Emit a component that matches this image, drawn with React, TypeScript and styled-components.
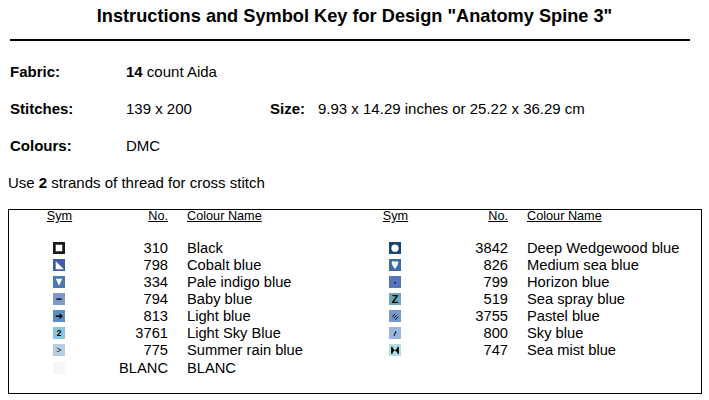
import React from "react";
import styled, { createGlobalStyle } from "styled-components";

const Global = createGlobalStyle`
  html, body { margin: 0; padding: 0; background: #fff; }
  body { font-family: "Liberation Sans", Arial, sans-serif; color: #000; }
`;

const Page = styled.div`
  width: 709px;
  height: 400px;
  box-sizing: border-box;
  padding: 0 8px 0 8px;
  overflow: hidden;
`;

const Title = styled.h1`
  margin: 0;
  padding-top: 6px;
  height: 20px;
  line-height: 20px;
  font-size: 18.2px;
  font-weight: bold;
  text-align: center;
`;

const Rule = styled.div`
  margin: 13px 11px 0 2px;
  height: 2px;
  background: #000;
`;

const InfoRow = styled.div`
  display: flex;
  align-items: center;
  height: 37px;
  font-size: 15px;
  padding-left: 2px;
`;

const InfoBlock = styled.div`
  margin-top: 12px;
`;

const Label = styled.span<{ $w: number }>`
  font-weight: bold;
  width: ${(p) => p.$w}px;
  flex: none;
`;

const Value = styled.span<{ $w?: number }>`
  width: ${(p) => (p.$w ? `${p.$w}px` : "auto")};
  flex: none;
  b { font-weight: bold; }
`;

const Strands = styled.div`
  font-size: 15px;
  height: 37px;
  line-height: 37px;
  b { font-weight: bold; }
`;

const KeyBox = styled.div`
  margin-top: 8px;
  height: 185px;
  box-sizing: border-box;
  border: 1px solid #000;
  width: 694px;
`;

const KeyGrid = styled.div`
  display: grid;
  grid-template-columns: 101px 58px 177px 101px 62px 1fr;
  grid-template-rows: 16px 13.5px;
  grid-auto-rows: 17.15px;
  align-items: center;
`;

const Head = styled.div<{ $align: "center" | "right" | "left"; $pad?: number }>`
  font-size: 12.7px;
  text-decoration: underline;
  text-align: ${(p) => p.$align};
  padding-left: ${(p) => p.$pad ?? 0}px;
  height: 16px;
  line-height: 16px;
  align-self: start;
  margin-top: -2px;
  white-space: nowrap;
`;

const Spacer = styled.div`
  grid-column: 1 / -1;
`;

const SymCell = styled.div`
  display: flex;
  justify-content: center;
  align-items: center;
  padding-right: 2px;
  padding-bottom: 1px;
`;

const Num = styled.div`
  font-size: 14.7px;
  text-align: right;
  line-height: 17px;
`;

const Name = styled.div`
  font-size: 14.7px;
  padding-left: 19px;
  line-height: 17px;
  white-space: nowrap;
`;

type SymKind =
  | "box" | "tri" | "down" | "dash" | "arrow" | "two" | "gt" | "blank"
  | "circle" | "heart" | "dot" | "z" | "hatch" | "slash" | "bowtie";

const Sym: React.FC<{ kind: SymKind; bg: string }> = ({ kind, bg }) => {
  const w = "#ffffff";
  const k = "#000000";
  let inner: React.ReactNode = null;
  switch (kind) {
    case "box":
      return (
        <svg width="12" height="12" viewBox="0 0 11 11">
          <rect x="1.25" y="1.25" width="8.5" height="8.5" fill="#fff" stroke="#1a1a1a" strokeWidth="2.5" />
        </svg>
      );
    case "tri":
      inner = <polygon points="2.5,2 2.5,9.5 10,9.5" fill={w} />;
      break;
    case "down":
      inner = <polygon points="2.5,2.5 8.5,2.5 5.5,9" fill={w} />;
      break;
    case "dash":
      inner = <rect x="3" y="5" width="5" height="1.2" fill={k} />;
      break;
    case "arrow":
      inner = (
        <>
          <rect x="2.5" y="5" width="4" height="1.4" fill={k} />
          <polygon points="6,3 9,5.7 6,8.4" fill={k} />
        </>
      );
      break;
    case "two":
      inner = (
        <text x="5.5" y="8.6" fontSize="7.5" fontWeight="bold" textAnchor="middle" fontFamily="Liberation Sans, Arial, sans-serif" fill={k}>
          2
        </text>
      );
      break;
    case "gt":
      inner = (
        <text x="5.5" y="8.4" fontSize="7.5" textAnchor="middle" fontFamily="Liberation Sans, Arial, sans-serif" fill="#222">
          &gt;
        </text>
      );
      break;
    case "blank":
      break;
    case "circle":
      inner = <circle cx="5.5" cy="5.7" r="3.3" fill={w} />;
      break;
    case "heart":
      inner = (
        <path d="M2.5 3.2 Q2.5 2 3.8 2 Q5.5 2 5.5 3.3 Q5.5 2 7.2 2 Q8.5 2 8.5 3.2 Q8.5 5.5 5.5 9.2 Q2.5 5.5 2.5 3.2 Z" fill={w} />
      );
      break;
    case "dot":
      inner = <rect x="5" y="5.5" width="1.3" height="1.3" fill={k} />;
      break;
    case "z":
      inner = (
        <text x="5.5" y="9.3" fontSize="10" fontWeight="bold" textAnchor="middle" fontFamily="Liberation Sans, Arial, sans-serif" fill={k}>
          Z
        </text>
      );
      break;
    case "hatch":
      inner = (
        <g stroke="#111" strokeWidth="0.9">
          <line x1="3" y1="6.5" x2="5.5" y2="3.5" />
          <line x1="4.2" y1="8" x2="7.2" y2="4.5" />
          <line x1="5.8" y1="9" x2="8.5" y2="6" />
        </g>
      );
      break;
    case "slash":
      inner = <line x1="4.5" y1="8" x2="6.5" y2="4" stroke="#111" strokeWidth="1" />;
      break;
    case "bowtie":
      inner = (
        <>
          <rect x="2" y="2.5" width="1.3" height="6.5" fill={k} />
          <rect x="7.7" y="2.5" width="1.3" height="6.5" fill={k} />
          <polygon points="2.5,3 5.5,5.75 2.5,8.5" fill={k} />
          <polygon points="8.5,3 5.5,5.75 8.5,8.5" fill={k} />
        </>
      );
      break;
  }
  return (
    <svg width="12" height="12" viewBox="0 0 11 11">
      <rect x="0" y="0" width="11" height="11" fill={bg} />
      {inner}
    </svg>
  );
};

type Entry = { kind: SymKind; bg: string; no: string; name: string };

const left: Entry[] = [
  { kind: "box", bg: "#fff", no: "310", name: "Black" },
  { kind: "tri", bg: "#3f5eac", no: "798", name: "Cobalt blue" },
  { kind: "down", bg: "#4b79b4", no: "334", name: "Pale indigo blue" },
  { kind: "dash", bg: "#8098cb", no: "794", name: "Baby blue" },
  { kind: "arrow", bg: "#5a8ec4", no: "813", name: "Light blue" },
  { kind: "two", bg: "#88c4de", no: "3761", name: "Light Sky Blue" },
  { kind: "gt", bg: "#b3cfe1", no: "775", name: "Summer rain blue" },
  { kind: "blank", bg: "#f6f6f6", no: "BLANC", name: "BLANC" },
];

const right: Entry[] = [
  { kind: "circle", bg: "#1b4478", no: "3842", name: "Deep Wedgewood blue" },
  { kind: "heart", bg: "#3a6aa9", no: "826", name: "Medium sea blue" },
  { kind: "dot", bg: "#5775b9", no: "799", name: "Horizon blue" },
  { kind: "z", bg: "#6ba8bf", no: "519", name: "Sea spray blue" },
  { kind: "hatch", bg: "#7699cd", no: "3755", name: "Pastel blue" },
  { kind: "slash", bg: "#99b6de", no: "800", name: "Sky blue" },
  { kind: "bowtie", bg: "#b1dee5", no: "747", name: "Sea mist blue" },
];

const Half: React.FC<{ e?: Entry }> = ({ e }) =>
  e ? (
    <>
      <SymCell>
        <Sym kind={e.kind} bg={e.bg} />
      </SymCell>
      <Num>{e.no}</Num>
      <Name>{e.name}</Name>
    </>
  ) : (
    <>
      <div />
      <div />
      <div />
    </>
  );

export default function App() {
  return (
    <>
      <Global />
      <Page>
        <Title>Instructions and Symbol Key for Design "Anatomy Spine 3"</Title>
        <Rule />
        <InfoBlock>
          <InfoRow>
            <Label $w={116}>Fabric:</Label>
            <Value>
              <b>14</b> count Aida
            </Value>
          </InfoRow>
          <InfoRow>
            <Label $w={116}>Stitches:</Label>
            <Value $w={144}>139 x 200</Value>
            <Label $w={48}>Size:</Label>
            <Value>9.93 x 14.29 inches or 25.22 x 36.29 cm</Value>
          </InfoRow>
          <InfoRow>
            <Label $w={116}>Colours:</Label>
            <Value>DMC</Value>
          </InfoRow>
        </InfoBlock>
        <Strands>
          Use <b>2</b> strands of thread for cross stitch
        </Strands>
        <KeyBox>
          <KeyGrid>
            <Head $align="center">Sym</Head>
            <Head $align="right">No.</Head>
            <Head $align="left" $pad={19}>Colour Name</Head>
            <Head $align="center">Sym</Head>
            <Head $align="right">No.</Head>
            <Head $align="left" $pad={19}>Colour Name</Head>
            <Spacer />
            {left.map((e, i) => (
              <React.Fragment key={i}>
                <Half e={e} />
                <Half e={right[i]} />
              </React.Fragment>
            ))}
          </KeyGrid>
        </KeyBox>
      </Page>
    </>
  );
}
